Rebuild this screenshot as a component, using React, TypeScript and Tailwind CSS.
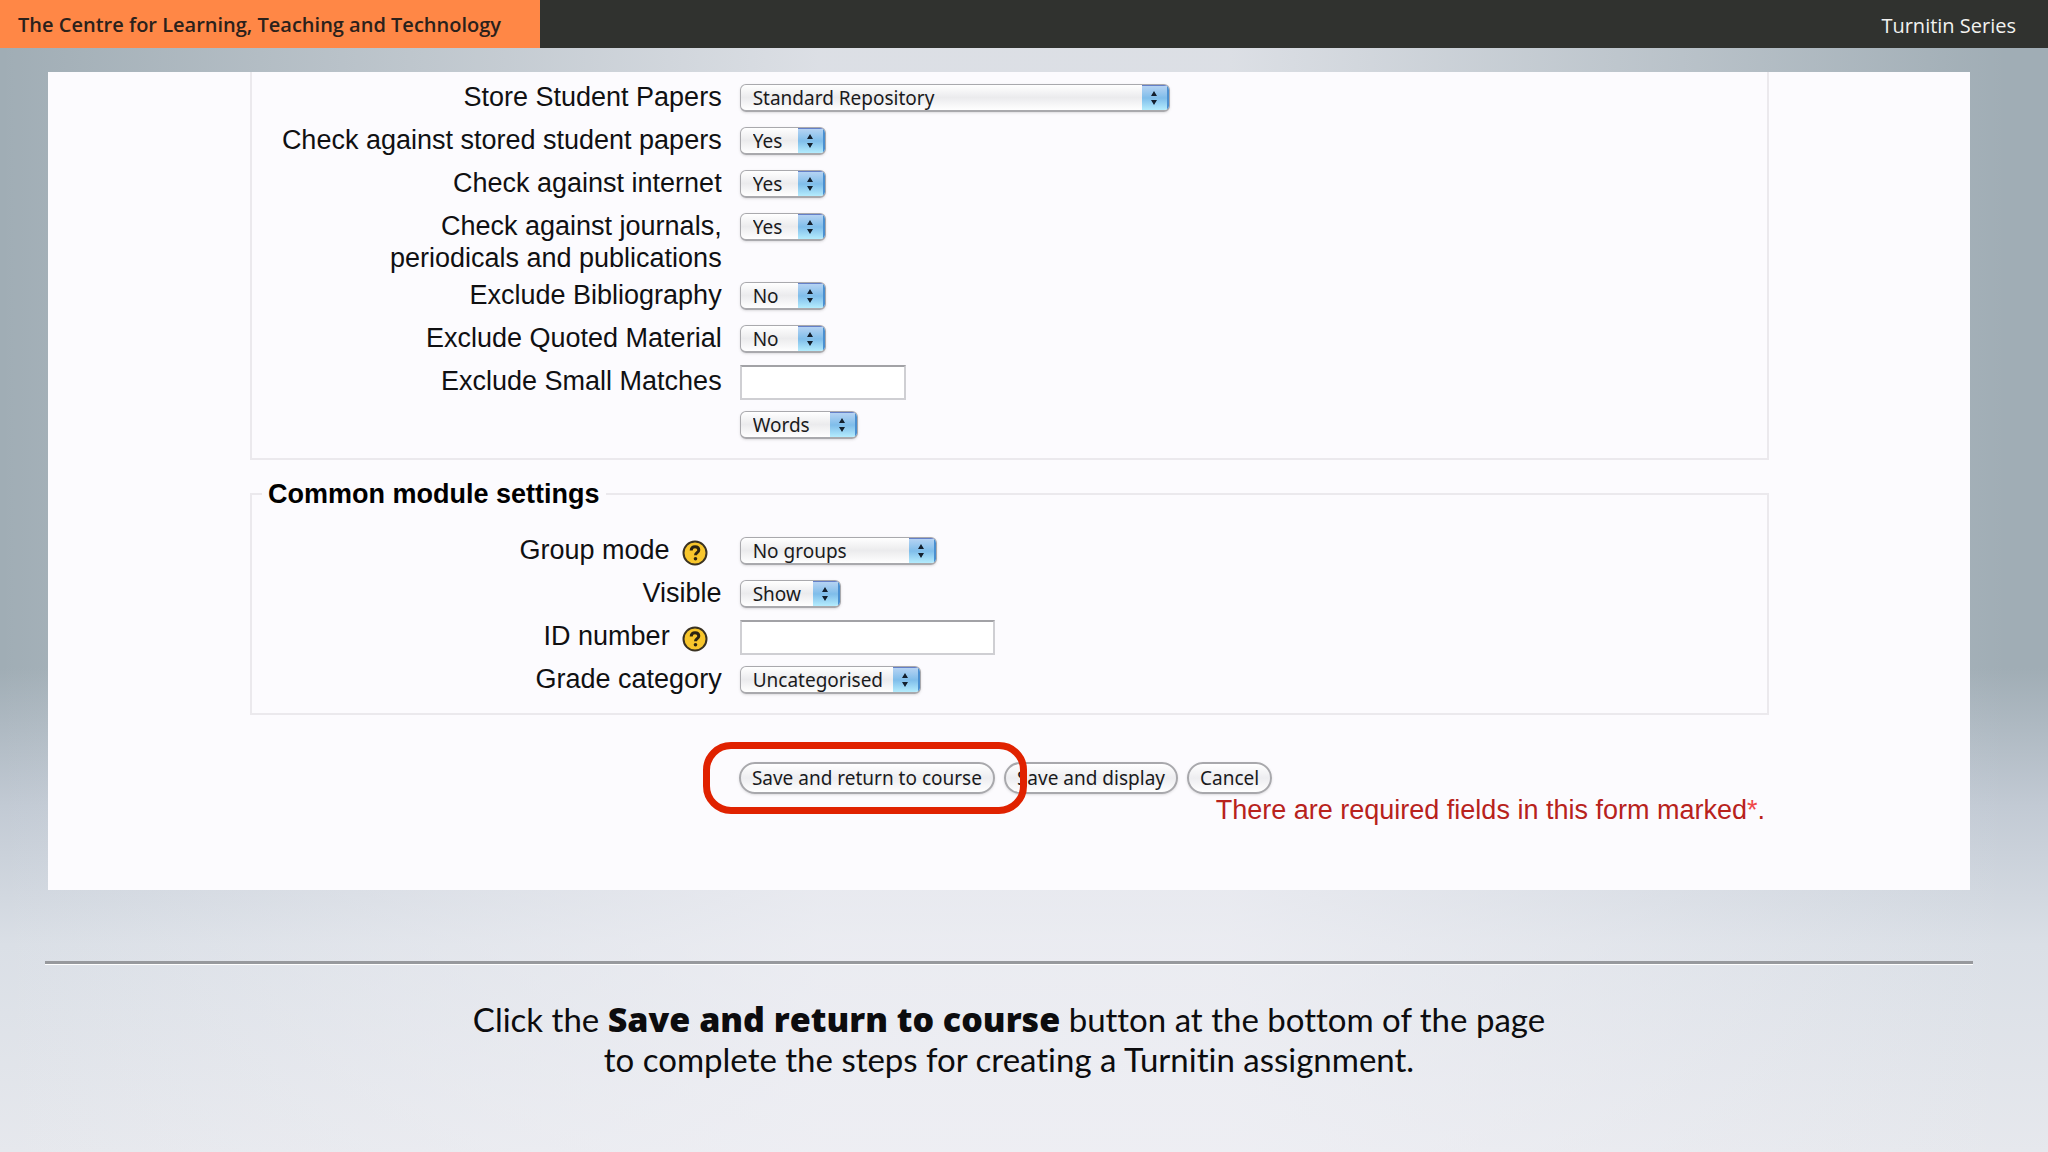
import { useId } from "react";

type SelectFieldProps = {
  label: string;
  value: string;
  width: string;
  help?: boolean;
};

type TextFieldProps = {
  label: string;
  width: string;
  help?: boolean;
};

type RowProps = {
  id: string;
  label?: string;
  help?: boolean;
  children: React.ReactNode;
};

function HelpIcon() {
  return (
    <svg viewBox="0 0 26 26" className="size-[26px]" aria-hidden="true">
      <circle cx="13" cy="13" r="11.5" fill="#f8c62c" stroke="#3a3222" strokeWidth="2" />
      <path
        d="M9.2 10.5c0-2.6 1.6-3.8 3.8-3.8s3.8 1.3 3.8 3.3c0 2.6-3.3 2.7-3.3 5.2"
        fill="none"
        stroke="#2c2412"
        strokeWidth="3"
      />
      <circle cx="13.5" cy="18.8" r="1.8" fill="#2c2412" />
    </svg>
  );
}

function Row({ id, label, help = false, children }: RowProps) {
  return (
    <div className="flex min-h-[38px] items-start gap-[18px]">
      <div className="flex w-[31%] shrink-0 justify-end text-right">
        {label && (
          <label htmlFor={id} className="text-balance">
            {label}
          </label>
        )}
        {help && (
          <button
            type="button"
            aria-label={`Help with ${label}`}
            className="mr-3.5 ml-3 pt-1.5"
          >
            <HelpIcon />
          </button>
        )}
      </div>
      {children}
    </div>
  );
}

function Select({
  id,
  value,
  width,
  ariaLabel,
}: {
  id: string;
  value: string;
  width: string;
  ariaLabel?: string;
}) {
  return (
    <div
      className={`relative mt-[3px] h-7 overflow-hidden rounded-md border border-b-2 border-[#a9a9ad] bg-linear-to-b from-white via-[#ebebed] to-white shadow-sm ${width}`}
    >
      <select
        id={id}
        defaultValue={value}
        aria-label={ariaLabel}
        className="block h-full w-full appearance-none pl-3 font-['Noto_Sans','Open_Sans',sans-serif] text-[19px] leading-6 text-[#1a1a1c]"
      >
        <option>{value}</option>
      </select>
      <span className="pointer-events-none absolute inset-y-0 right-0 flex w-[27px] items-center justify-center border-t border-r-2 border-t-[#6580c8] border-r-[#4a8fd0] bg-linear-to-b from-[#b5d3f3] via-[#7fbdea] to-[#b4ecfd]">
        <svg viewBox="0 0 8 18" className="h-[18px] w-2" fill="#14202e" aria-hidden="true">
          <path d="M4 2 7 7H1ZM4 16 1 11H7Z" />
        </svg>
      </span>
    </div>
  );
}

function SelectField({ label, value, width, help }: SelectFieldProps) {
  const id = useId();

  return (
    <Row id={id} label={label} help={help}>
      <Select id={id} value={value} width={width} />
    </Row>
  );
}

function TextField({ label, width, help }: TextFieldProps) {
  const id = useId();

  return (
    <Row id={id} label={label} help={help}>
      <input
        id={id}
        type="text"
        className={`h-[35px] border-2 border-[#cfcfd3] border-t-[#a2a2a6] bg-white px-2 text-xl ${width}`}
      />
    </Row>
  );
}

function FormButton({ children }: { children: React.ReactNode }) {
  return (
    <button
      type="button"
      className="h-8 rounded-full border-2 border-[#a8a8ac] bg-linear-to-b from-white via-[#ededf0] to-white px-[11px] font-['Noto_Sans','Open_Sans',sans-serif] text-[19px] leading-6 text-[#1a1a1c] shadow-sm"
    >
      {children}
    </button>
  );
}

function SettingsForm() {
  return (
    <form className="bg-[#fcfbfe] pr-[201px] pb-16 pl-[202px] font-['Liberation_Sans',Arial,sans-serif] text-[27px] leading-8 text-[#101012]">
      <fieldset className="flex flex-col gap-[5px] border-2 border-t-0 border-[#ebe9ed] pt-[9px] pb-3">
        <SelectField label="Store Student Papers" value="Standard Repository" width="w-[430px]" />
        <SelectField label="Check against stored student papers" value="Yes" width="w-[86px]" />
        <SelectField label="Check against internet" value="Yes" width="w-[86px]" />
        <SelectField
          label="Check against journals, periodicals and publications"
          value="Yes"
          width="w-[86px]"
        />
        <SelectField label="Exclude Bibliography" value="No" width="w-[86px]" />
        <SelectField label="Exclude Quoted Material" value="No" width="w-[86px]" />
        <TextField label="Exclude Small Matches" width="w-[166px]" />
        <Row id="match-unit">
          <Select
            id="match-unit"
            value="Words"
            width="w-[118px]"
            ariaLabel="Exclude small matches by"
          />
        </Row>
      </fieldset>

      <fieldset className="mt-[18px] border-2 border-[#ebe9ed] pb-3">
        <legend className="ml-2.5 px-1.5 font-bold text-black">Common module settings</legend>
        <div className="flex flex-col gap-[5px] pt-6">
          <SelectField label="Group mode" value="No groups" width="w-[197px]" help />
          <SelectField label="Visible" value="Show" width="w-[101px]" />
          <TextField label="ID number" width="w-[255px]" help />
          <SelectField label="Grade category" value="Uncategorised" width="w-[181px]" />
        </div>
      </fieldset>

      <div className="mt-[47px] flex gap-[9px] pl-[calc(31%+18px)]">
        <div className="relative flex">
          <FormButton>Save and return to course</FormButton>
          <span className="pointer-events-none absolute -inset-y-5 -right-8 -left-9 z-10 rounded-[28px] border-7 border-[#e02200]" />
        </div>
        <FormButton>Save and display</FormButton>
        <FormButton>Cancel</FormButton>
      </div>
      <p className="pr-1 text-right text-[#b8221c]">
        There are required fields in this form marked<span className="text-[#f04848]">*</span>.
      </p>
    </form>
  );
}

export default function App() {
  return (
    <div className="flex min-h-screen flex-col bg-[linear-gradient(to_right,rgba(240,240,245,0),rgba(240,240,245,0.75)_40%,rgba(240,240,245,0.75)_60%,rgba(240,240,245,0)_98%),linear-gradient(to_bottom,#a0adb5,#a0adb5_58%,#c2cad4_70%,#dadfe6_82%,#e6e8ed)]">
      <header className="flex h-12 items-stretch justify-between bg-[#30322f]">
        <h1 className="flex items-center bg-[#ff8746] pt-0.5 pr-[39px] pl-[18px] font-['Open_Sans',sans-serif] text-xl font-semibold text-[#2b211b]">
          The Centre for Learning, Teaching and Technology
        </h1>
        <p className="flex items-center pt-1 pr-8 font-['Open_Sans',sans-serif] text-xl text-[#f2f2f0]">
          Turnitin Series
        </p>
      </header>

      <main className="flex-1 pt-6 pr-[78px] pb-12 pl-12">
        <SettingsForm />
        <hr className="-mx-[3px] mt-[71px] h-1 border-0 border-t-3 border-b border-t-[#97999d] border-b-white" />
        <p className="mt-[34px] text-center font-['Lato',sans-serif] text-[33px] leading-10 text-[#0c0c0e] [font-variant-ligatures:none]">
          Click the{" "}
          <strong className="font-['Open_Sans',sans-serif] text-[34px] font-extrabold">
            Save and return to course
          </strong>{" "}
          button at the bottom of the page
          <br />
          to complete the steps for creating a Turnitin assignment.
        </p>
      </main>
    </div>
  );
}
